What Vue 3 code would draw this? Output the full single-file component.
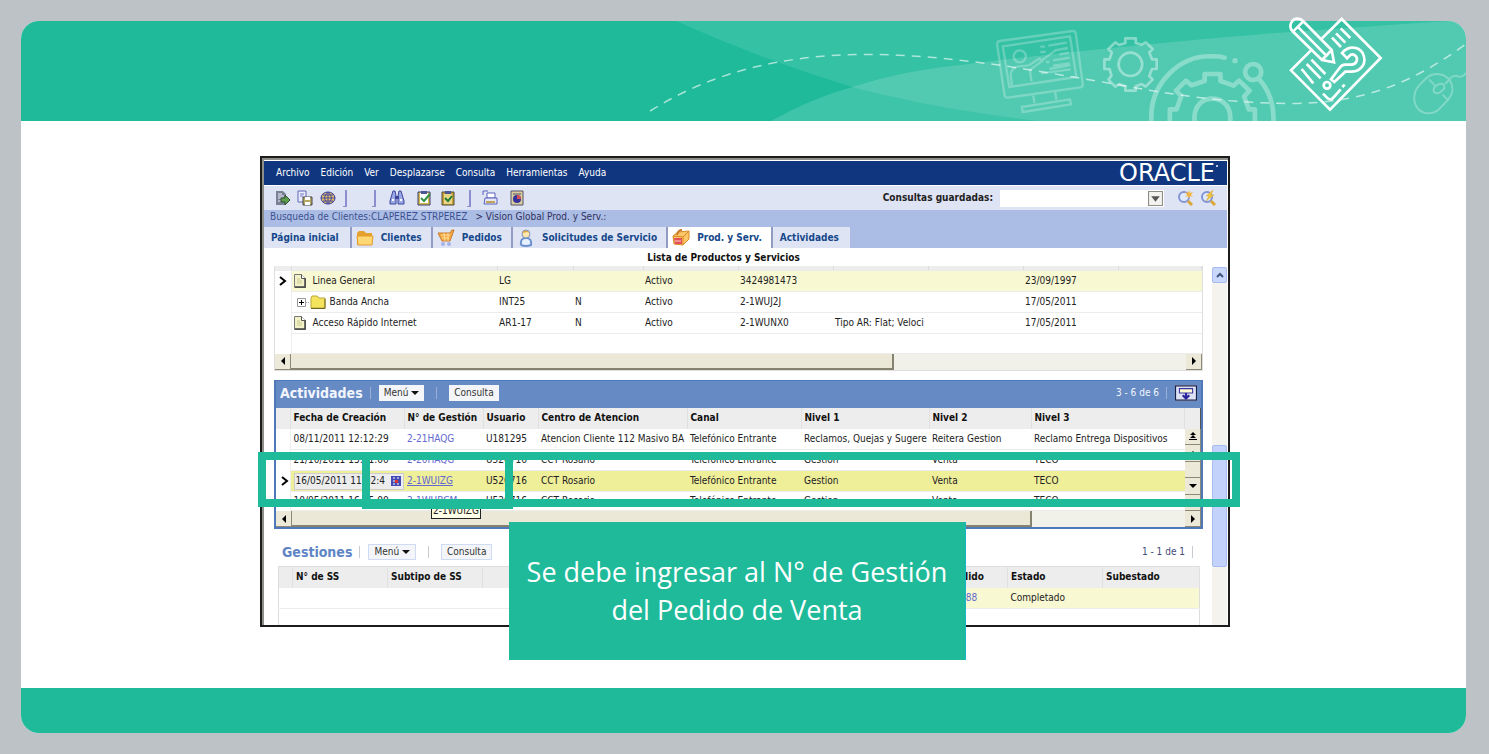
<script setup>
const menu = ['Archivo', 'Edición', 'Ver', 'Desplazarse', 'Consulta', 'Herramientas', 'Ayuda']
const tabs = [
  { label: 'Página inicial', icon: '' },
  { label: 'Clientes', icon: 'folder' },
  { label: 'Pedidos', icon: 'cart' },
  { label: 'Solicitudes de Servicio', icon: 'person' },
  { label: 'Prod. y Serv.', icon: 'box', active: true },
  { label: 'Actividades', icon: '' },
]
const products = [
  { icon: 'page', current: true, cells: ['Linea General', 'LG', '', 'Activo', '3424981473', '', '', '23/09/1997', ''] },
  { icon: 'folder', cells: ['Banda Ancha', 'INT25', 'N', 'Activo', '2-1WUJ2J', '', '', '17/05/2011', ''] },
  { icon: 'page', cells: ['Acceso Rápido Internet', 'AR1-17', 'N', 'Activo', '2-1WUNX0', 'Tipo AR: Flat; Veloci', '', '17/05/2011', ''] },
  { icon: '', cells: ['', '', '', '', '', '', '', '', ''] },
]
const activityHead = ['Fecha de Creación', 'N° de Gestión', 'Usuario', 'Centro de Atencion', 'Canal', 'Nivel 1', 'Nivel 2', 'Nivel 3']
const activities = [
  { id: '2-21HAQG', date: '08/11/2011 12:12:29', rest: ['U181295', 'Atencion Cliente 112 Masivo BA', 'Telefónico Entrante', 'Reclamos, Quejas y Sugere', 'Reitera Gestion', 'Reclamo Entrega Dispositivos'] },
  { id: '2-20HAQG', date: '21/10/2011 13:01:00', rest: ['U520716', 'CCT Rosario', 'Telefónico Entrante', 'Gestion', 'Venta', 'TECO'] },
  { id: '2-1WUIZG', date: '16/05/2011 11:02:4', current: true, rest: ['U520716', 'CCT Rosario', 'Telefónico Entrante', 'Gestion', 'Venta', 'TECO'] },
  { id: '2-1WUBCM', date: '10/05/2011 16:45:00', rest: ['U520716', 'CCT Rosario', 'Telefónico Entrante', 'Gestion', 'Venta', 'TECO'] },
]
const gestionHead = ['N° de SS', 'Subtipo de SS', '', '', '', '', 'Pedido', 'Estado', 'Subestado']
const gestionRow = ['', '', '', '', '', '', '21988', 'Completado', '']
</script>

<template>
  <div class="stage">
    <main class="slide">
      <header class="banner">
        <svg class="waves" viewBox="21 21 1445 100" preserveAspectRatio="xMaxYMid slice" aria-hidden="true">
          <path fill="#fff" fill-opacity=".1" d="M676 21Q760 59 852 87Q935 109 1038 121H1466V21Z" />
          <path fill="#fff" fill-opacity=".145" d="M771 121Q810 99 852 87Q905 70 960 65Q1115 46 1276 33L1432 22L1466 20V121Z" />
          <g transform="translate(960 0) scale(.3374 .3333)" fill="none" stroke="#fff" stroke-linejoin="round">
            <g stroke-width="7" opacity=".25">
              <path d="M117 123L333 93Q341 92 343 100L364 252Q365 260 357 262L142 293Q134 294 132 286L110 133Q110 124 117 123ZM127 139L326 109L345 231L146 261ZM217 287L221 309M282 277L286 299M183 321L326 298L329 313L186 336Z" />
              <circle cx="177" cy="169" r="18" />
              <path d="M154 258L150 222Q154 201 175 199L205 196L236 175L245 182L207 210L212 244M236 186L287 148" />
              <path d="M238 140H252M238 156H254M262 137L316 128M281 151L320 144M295 163L323 158M276 181L325 173M276 197L325 190M265 207L327 195M240 220L328 208M255 186H265" />
            </g>
            <g opacity=".4" stroke-width="8">
              <path d="M490 115H521V129L539 134L551 127L571 147L561 157L569 178H583V207H569L561 228L571 239L550 260L538 252L521 259V272H490V259L472 252L460 260L440 239L449 227L443 207H428V178H443L450 157L440 147L460 127L472 135L490 129Z" />
              <circle cx="505" cy="193" r="35" />
            </g>
            <g opacity=".32" stroke-width="14">
              <path stroke-linecap="round" d="M567 366V350C567 250 650 165 748 169Q767 168 784 173M888 239Q932 290 929 366" />
              <circle cx="869" cy="216" r="24" />
              <circle cx="815" cy="182" r="8" fill="#fff" stroke="none" />
              <path d="M622 366V328H642L656 288L640 272L670 242L686 256L725 243V222H772V243L811 257L827 242L858 272L842 290L856 328H874V366M695 366V350C697 278 799 278 801 350V366" />
            </g>
            <path opacity=".28" stroke-width="6" d="M1360 257L1382 235C1405 214 1438 221 1453 243C1464 264 1462 280 1446 300L1425 322C1407 343 1378 347 1358 327C1341 307 1343 278 1360 257ZM1390 238L1408 257M1430 284L1448 302M1408 260Q1420 248 1431 252Q1440 260 1432 269L1423 277Q1412 283 1405 276Q1401 268 1408 260M1438 252L1456 232Q1466 224 1478 230Q1490 232 1502 217" />
          </g>
          <path class="trail" d="M650 111C712 72 783 55 863 54.500C950 54 1042 72 1097 81C1159 92 1214 103 1291 103.500C1369 103 1416 80 1466 44" />
        </svg>
        <svg class="sketch" viewBox="970 44 290 294" aria-hidden="true">
          <g fill="none" stroke="#fff" stroke-width="8">
            <path d="M1069 118L1132 56L1249 173L1097 328L980 210L1040 150" />
            <path d="M984 92C971 77 982 55 1000 55Q1010 56 1016 62L1102 149L1109 186L1073 179ZM986 94L1017 63M1000 79L1089 169M1073 179L1102 149" />
            <path d="M1103 112L1130 140M1115 99L1143 127M1129 84L1158 113M1041 178L1083 221M1027 191L1069 234M1012 206L1047 249" />
            <path d="M1133 158C1151 136 1182 137 1195 158C1210 188 1190 214 1162 214H1143L1110 245L1100 237L1125 204Q1132 192 1145 193H1161C1178 192 1183 174 1172 165C1161 158 1156 165 1148 174Z" />
            <circle cx="1088" cy="255" r="10" />
            <path d="M1076 280L1090 294Q1098 301 1106 293L1129 267M1134 260L1141 253" />
          </g>
        </svg>
      </header>

      <section class="body">
        <div class="window">
          <div class="menubar">
            <button v-for="m in menu" :key="m" type="button">{{ m }}</button>
            <span class="oracle">ORACLE<i></i></span>
          </div>

          <div class="toolbar">
            <button type="button" aria-label="Salir"><svg viewBox="0 0 16 16"><path d="M2 1h7l3 3v11H2z" fill="#7a8296" /><path d="M4 4h4M4 6h6M4 8h5M4 11h4" stroke="#eef0f8" /><path d="M7 8h4V5l5 5-5 5v-3H7z" fill="#5da04c" stroke="#354c35" /></svg></button>
            <button type="button" aria-label="Guardar"><svg viewBox="0 0 16 16"><path d="M1 1h8v11H1z" fill="#e9edff" stroke="#6065b4" /><path d="M3 4h4M3 6h3" stroke="#777bc6" /><path d="M6 7h9v8H6z" fill="#b6a965" stroke="#444" /><path d="M8 7h5v3H8zM8 12h5v3H8z" fill="#fff" /></svg></button>
            <button type="button" aria-label="Mapa"><svg viewBox="0 0 16 16"><ellipse cx="8" cy="8" rx="7" ry="6" fill="#e1c15b" stroke="#31339a" /><path d="M8 2v12M1 8h14M3 5h10M3 11h10M8 2Q1 8 8 14M8 2Q15 8 8 14" fill="none" stroke="#4a4ba6" /></svg></button>
            <span class="bracket"></span><span class="bracket far"></span>
            <button class="second" type="button" aria-label="Buscar"><svg viewBox="0 0 16 16"><path d="M4 1h2l1 5v8H1v-3zM10 1h2l3 10v3H9V6z" fill="#9aa9e6" stroke="#3c4599" /><path d="M6 6h4v3H6z" fill="#3c4599" /><path d="M3 10h2M11 10h2" stroke="#fff" stroke-width="2" /></svg></button>
            <button class="second" type="button" aria-label="Nueva consulta"><svg viewBox="0 0 16 16"><path d="M2 2h12v13H2z" fill="#d8b84e" stroke="#39406e" /><path d="M4 3h8v10H4z" fill="#fff" /><path d="M5 1h6v3H5z" fill="#4b5795" /><path d="M5 8l3 3 6-7" fill="none" stroke="#319244" stroke-width="2" /></svg></button>
            <button class="near" type="button" aria-label="Ejecutar consulta"><svg viewBox="0 0 16 16"><path d="M2 2h12v13H2z" fill="#c4a336" stroke="#554a38" /><path d="M4 4h8v10H4z" fill="#e8d686" /><path d="M5 1h6v3H5z" fill="#4b5795" /><path d="M5 8l3 3 4-5" fill="none" stroke="#207d35" stroke-width="2" /></svg></button>
            <span class="bracket second"></span>
            <button class="second" type="button" aria-label="Imprimir"><svg viewBox="0 0 16 16"><path d="M1 5V1h5" fill="none" stroke="#5961bd" /><path d="M5 3h8v5H5z" fill="#fff" stroke="#5961bd" /><path d="M3 8h12v6H2z" fill="#e4e5f8" stroke="#5961bd" /><path d="M4 12h9" stroke="#c3a450" stroke-width="2" /></svg></button>
            <button class="second" type="button" aria-label="Informe"><svg viewBox="0 0 16 16"><path d="M2 1h12v14H2z" fill="#d9cd9c" stroke="#56536e" /><path d="M4 4h8" stroke="#56536e" /><circle cx="8" cy="9" r="4" fill="#35329c" /><path d="M8 9V5a4 4 0 0 1 4 4z" fill="#d84f55" /></svg></button>
            <label for="saved">Consultas guardadas:</label>
            <div class="pick"><select id="saved"><option></option></select><svg viewBox="0 0 14 14"><path d="M.5.5h13v13H.5z" fill="#f3f2ef" stroke="#8d8d88" /><path d="M3 5h8l-4 5z" fill="#555" /></svg></div>
            <button type="button" aria-label="Crear búsqueda"><svg viewBox="0 0 16 16"><circle cx="6" cy="7" r="5" fill="#dfeaff" stroke="#8393d3" stroke-width="2" /><path d="M10 11l4 4" stroke="#daa638" stroke-width="3" /><path d="M11 0l1 3 3-1-2 3 2 2-3-1-1 3-1-3-3 1 2-2-2-3 3 1z" fill="#f3b740" /></svg></button>
            <button type="button" aria-label="Búsqueda rápida"><svg viewBox="0 0 16 16"><circle cx="6" cy="7" r="5" fill="#dfeaff" stroke="#8393d3" stroke-width="2" /><path d="M10 11l4 4" stroke="#daa638" stroke-width="3" /><path d="M12 0L5 6h3l-3 5 8-6h-3z" fill="#f3c83f" stroke="#d9a63a" stroke-width=".5" /></svg></button>
          </div>

          <nav class="crumbs"><a href="#">Busqueda de Clientes:CLAPEREZ STRPEREZ</a><span>&gt; Vision Global Prod. y Serv.:</span></nav>

          <nav class="tabs">
            <a v-for="t in tabs" :key="t.label" href="#" :class="{ active: t.active, plain: !t.icon }">
              <svg v-if="t.icon === 'folder'" viewBox="0 0 18 18"><path d="M1 4l2-2h5l2 2h6v12H1z" fill="#e5a12d" /><path d="M1 7h16l-1 9H2z" fill="#ffd875" stroke="#e09a2a" /></svg>
              <svg v-else-if="t.icon === 'cart'" viewBox="0 0 18 18"><path d="M1 4h12l2-3h2l-4 11H5z" fill="#f7a941" stroke="#c6792a" /><path d="M4 6h9M5 9h7M7 4l1 8M11 4v8" stroke="#fbdc9b" /><circle cx="6" cy="15" r="2" fill="#a5b2e6" /><circle cx="12" cy="15" r="2" fill="#a5b2e6" /></svg>
              <svg v-else-if="t.icon === 'person'" viewBox="0 0 18 18"><path d="M4 16q-1-7 5-7t5 7q-5 2-10 0" fill="#e6f0ff" stroke="#6d91cf" stroke-width="2" /><circle cx="9" cy="5" r="4" fill="#ffe6ac" stroke="#7b92bd" /><path d="M5 4q3-5 8 0l-3-1z" fill="#d9a236" /></svg>
              <svg v-else-if="t.icon === 'box'" viewBox="0 0 18 18"><path d="M1 7l5-4 11-1v8l-6 6-9-1z" fill="#fbc667" stroke="#d88a26" /><path d="M1 7l10 1 6-6M11 8v8" fill="none" stroke="#d88a26" /><path d="M2 9h8v6H3z" fill="#e4515b" /><path d="M3 12h6" stroke="#ffd2c2" /><path d="M5 6Q6 1 10 1" fill="none" stroke="#c97a2a" stroke-width="2" /></svg>
              {{ t.label }}
            </a>
          </nav>

          <div class="workspace">
            <div class="panels">
              <h2 class="listing">Lista de Productos y Servicios</h2>
              <section class="panel products">
                <table>
                  <colgroup><col class="w16" /><col class="w206" /><col class="w76" /><col class="w70" /><col class="w95" /><col class="w95" /><col class="w95" /><col class="w95" /><col class="w95" /><col /></colgroup>
                  <tbody>
                    <tr class="sliver"><td v-for="n in 10" :key="n"></td></tr>
                    <tr v-for="(p, r) in products" :key="r" :class="{ pale: p.current, blank: !p.icon }">
                      <td class="mark"><svg v-if="p.current" viewBox="0 0 8 10"><path d="M1 1l5 4-5 4" fill="none" stroke="#000" stroke-width="2" /></svg></td>
                      <td v-for="(c, i) in p.cells" :key="i">
                        <span v-if="i === 0" class="node">
                          <svg v-if="p.icon === 'page'" class="page" viewBox="0 0 12 14"><path d="M.5.5h7l4 4v9H.5z" fill="#f2f2c8" stroke="#777" /><path d="M11 4v9H1" fill="none" stroke="#444" stroke-width="1.500" /><path d="M7.500.5v4h4" fill="#fff" stroke="#555" /><path d="M3 5h3M3 7h5M3 9h5" stroke="#ccc891" /></svg>
                          <svg v-if="p.icon === 'folder'" class="tree" viewBox="0 0 30 14"><path d="M1.500 3.500h8v8h-8z" fill="#fff" stroke="#999" /><path d="M3 7.500h5M5.500 5v5" stroke="#000" /><path d="M10 7.500h4" stroke="#aaa" stroke-dasharray="1 1" /><path d="M15 3l1-2h5l2 2h6v10H15z" fill="#f3e35d" stroke="#b9a73a" /><path d="M29 4v9.500H15" fill="none" stroke="#6e6423" /></svg>
                          {{ c }}
                        </span>
                        <template v-else>{{ c }}</template>
                      </td>
                    </tr>
                  </tbody>
                </table>
                <div class="hbar"><button type="button" aria-label="Izquierda" class="end"><svg viewBox="0 0 8 8"><path d="M6 0v8L2 4z" /></svg></button><span class="thumb long"></span><button type="button" aria-label="Derecha" class="end right"><svg viewBox="0 0 8 8"><path d="M2 0v8l4-4z" /></svg></button></div>
              </section>

              <section class="panel activities">
                <div class="bar">
                  <h3>Actividades</h3><i></i><button type="button">Menú <b></b></button><i class="mid"></i><button type="button">Consulta</button>
                  <span class="count">3 - 6 de 6</span><i></i>
                  <button class="expand" type="button" aria-label="Expandir"><svg viewBox="0 0 20 14"><path d="M.5.5h19v13H.5z" fill="#dde3f5" stroke="#181d44" /><path d="M4 3h12v4H4z" fill="#fffbd0" stroke="#3d36a0" /><path d="M10 7v5M7 9l3 3 3-3" fill="none" stroke="#29249a" stroke-width="2" /></svg></button>
                </div>
                <div class="grid">
                  <table>
                    <colgroup><col class="w14" /><col class="w114" /><col class="w79" /><col class="w55" /><col class="w149" /><col class="w114" /><col class="w128" /><col class="w102" /><col /></colgroup>
                    <thead><tr><th></th><th v-for="h in activityHead" :key="h">{{ h }}</th></tr></thead>
                    <tbody>
                      <tr v-for="a in activities" :key="a.id" :class="{ current: a.current }">
                        <td class="mark"><svg v-if="a.current" viewBox="0 0 8 10"><path d="M1 1l5 4-5 4" fill="none" stroke="#000" stroke-width="2" /></svg></td>
                        <td><span v-if="a.current" class="field">{{ a.date }}<svg viewBox="0 0 10 10"><path d="M0 0h10v10H0z" fill="#434bb4" /><path d="M2 2h2M6 2h2M2 5h2M2 8h2M6 8h2" stroke="#fff" /><path d="M4 4h3v3H4z" fill="#d33" /></svg></span><template v-else>{{ a.date }}</template></td>
                        <td><a href="#">{{ a.id }}</a></td>
                        <td v-for="(c, i) in a.rest" :key="i">{{ c }}</td>
                      </tr>
                    </tbody>
                  </table>
                  <div class="side">
                    <div class="cap"></div>
                    <button type="button" aria-label="Inicio"><svg viewBox="0 0 8 8"><path d="M4 0l3 3H1zM4 3l3 3H1zM0 7h8v1H0z" /></svg></button>
                    <button type="button" aria-label="Arriba"><svg viewBox="0 0 8 8"><path d="M4 2l4 4H0z" /></svg></button>
                    <span class="knob"></span>
                    <button type="button" aria-label="Abajo"><svg viewBox="0 0 8 8"><path d="M4 6l4-4H0z" /></svg></button>
                    <button type="button" aria-label="Fin"><svg viewBox="0 0 8 8"><path d="M4 4L1 1h6zM4 7L1 4h6z" /></svg></button>
                  </div>
                </div>
                <div class="hbar"><button type="button" aria-label="Izquierda" class="end"><svg viewBox="0 0 8 8"><path d="M6 0v8L2 4z" /></svg></button><span class="thumb longer"></span><button type="button" aria-label="Derecha" class="end right"><svg viewBox="0 0 8 8"><path d="M2 0v8l4-4z" /></svg></button></div>
                <div class="tip">2-1WUIZG</div>
              </section>

              <section class="panel gestiones">
                <div class="bar">
                  <h3>Gestiones</h3><i></i><button type="button">Menú <b></b></button><i class="mid"></i><button type="button">Consulta</button>
                  <span class="count">1 - 1 de 1</span><i class="last"></i>
                </div>
                <table>
                  <colgroup><col class="w14" /><col class="w95" /><col class="w95" /><col class="w95" /><col class="w95" /><col class="w95" /><col class="w178" /><col class="w62" /><col class="w95" /><col /></colgroup>
                  <thead><tr><th></th><th v-for="(h, i) in gestionHead" :key="i">{{ h }}</th></tr></thead>
                  <tbody>
                    <tr><td></td><td v-for="(c, i) in gestionRow" :key="i" :class="{ lit: i > 3 }"><a v-if="i === 6" href="#">{{ c }}</a><template v-else>{{ c }}</template></td></tr>
                    <tr class="partial"><td v-for="n in 10" :key="n"></td></tr>
                  </tbody>
                </table>
              </section>
            </div>
            <div class="vbar">
              <button type="button" aria-label="Subir"><svg viewBox="0 0 8 8"><path d="M1 6l3-3 3 3" fill="none" stroke="#40557f" stroke-width="2" /></svg></button>
              <span></span>
            </div>
          </div>

          <div class="frame row-frame"></div>
          <div class="frame cell-frame"></div>
          <p class="callout">Se debe ingresar al N° de Gestión<br />del Pedido de Venta</p>
        </div>
      </section>
      <footer class="base"></footer>
    </main>
  </div>
</template>

<style>
body { margin: 0; background: #bcc2c6; }
</style>

<style scoped>
* { box-sizing: border-box; }
.stage { padding: 21px 23px 21px 21px; background: #bcc2c6; }
.slide { border-radius: 18px; background: #fff; font: 10px/14px "DejaVu Sans Condensed", "Open Sans", sans-serif; color: #222; }
.banner { position: relative; height: 100px; border-radius: 18px 18px 0 0; background: #1eba9a; }
.waves { display: block; width: 100%; height: 100%; border-radius: 0 18px 0 0; }
.trail { fill: none; stroke: #fff; stroke-width: 1.500; stroke-opacity: .6; stroke-dasharray: 9 7; }
.sketch { position: absolute; right: 81px; top: -6px; width: 98px; height: 98px; }
.body { padding: 35px 236px 61px 239px; }
.base { height: 45px; border-radius: 0 0 18px 18px; background: #1eba9a; }
button { font: inherit; color: inherit; border: 0; background: none; padding: 0; margin: 0; }
a { color: inherit; text-decoration: none; }
svg { display: block; flex: none; }
i { font-style: normal; }

.window { position: relative; border: 2px solid #1c1c1c; padding: 3px 1px 0 2px; background: #fff; box-shadow: inset 1px 1px 0 1px #8d8f8b; }
.menubar { display: flex; align-items: center; height: 24px; padding: 0 12px; gap: 11px; background: #103680; color: #fff; }
.oracle { position: relative; margin-left: auto; font: 24px/24px "DejaVu Sans", sans-serif; }
.oracle i { position: absolute; right: -3px; top: 4px; width: 2px; height: 2px; background: #b8c4e0; }
.toolbar { display: flex; align-items: center; height: 25px; padding: 0 10px; gap: 7px; background: #dfe4f5; border-top: 1px solid #fff; }
.toolbar svg { width: 16px; height: 16px; }
.bracket { width: 4px; height: 17px; border: solid #8b8fd2; border-width: 0 2px 1px 0; }
.far { margin: 0 2px 0 18px; }
.second { margin-left: 4px; }
.near { margin-left: 1px; }
.toolbar label { margin-left: auto; font-weight: bold; color: #222; }
.pick { position: relative; width: 164px; height: 17px; margin-right: 7px; }
.pick select { width: 100%; height: 100%; border: 0; background: #fff; appearance: none; }
.pick svg { position: absolute; right: 1px; top: 1px; width: 15px; height: 15px; pointer-events: none; }
.crumbs { display: flex; gap: 8px; height: 17px; padding: 0 6px; background: #abbde4; color: #3d5192; }
.crumbs span { color: #32315f; }
.tabs { display: flex; height: 21px; background: #abbde4; font-weight: bold; color: #15488a; }
.tabs a { display: flex; align-items: center; gap: 7px; padding: 0 9px 0 4px; background: #dfe4f5; border-right: 2px solid #929bc2; white-space: nowrap; }
.tabs a.plain { padding: 0 11px 0 7px; }
.tabs a.active { background: #fff; }
.tabs a:last-child { border: 0; }
.tabs svg { width: 18px; height: 18px; }

.workspace { display: flex; gap: 9px; }
.panels { flex: 1; min-width: 0; padding-left: 10px; }
.listing { margin: 0; padding: 3px 30px 0 0; height: 18px; text-align: center; font-size: 10px; line-height: 14px; color: #111; }
.panel { position: relative; }
table { width: 100%; table-layout: fixed; border-collapse: collapse; }
td, th { height: 21px; padding: 0 0 0 3px; text-align: left; white-space: nowrap; overflow: hidden; border-bottom: 1px solid #ececec; }
th { background: #ededed; border: 0; border-right: 1px solid #e0e0e0; color: #111; }
.mark, tr .mark { background: #fff; border-bottom: 0; border-right: 1px solid #eee; }
.mark svg { width: 8px; height: 10px; margin-left: 2px; }
.w14 { width: 14px; } .w16 { width: 16px; } .w55 { width: 55px; } .w62 { width: 62px; } .w70 { width: 70px; } .w76 { width: 76px; }
.w79 { width: 79px; } .w95 { width: 95px; } .w102 { width: 102px; } .w114 { width: 114px; } .w128 { width: 128px; }
.w149 { width: 149px; } .w178 { width: 178px; } .w206 { width: 206px; }
.products { border: solid #dedede; border-width: 0 1px 1px; }
.products td { padding-left: 2px; }
.sliver td { height: 4px; background: #ededed; border-right: 1px solid #ddd; }
.blank td { height: 20px; }
.pale { background: #f8f8d2; }
.node { display: flex; align-items: center; gap: 7px; }
.page { width: 12px; height: 14px; }
.tree { width: 30px; height: 14px; margin-left: 2px; margin-right: -3px; }
.hbar { display: flex; height: 16px; background: #f2f1e9; }
.end { display: grid; place-items: center; width: 16px; background: #ece9d8; border: solid #8c8976; border-width: 0 1px 1px 0; }
.end svg, .side svg, .vbar svg { width: 8px; height: 8px; }
.end.right { margin-left: auto; }
.thumb { background: #ebe8d7; border: solid #858270; border-width: 0 2px 2px 0; }
.long { width: 65%; }
.longer { width: 80%; }

.bar { display: flex; align-items: center; height: 27px; }
.bar h3 { margin: 0; font-size: 14px; line-height: 16px; }
.bar > i { width: 1px; height: 12px; margin: 0 8px 0 7px; background: #9aaed6; }
.bar > i.mid { margin: 0 12px; }
.bar button { height: 16px; padding: 0 5px; background: #f4f5f8; color: #333; white-space: nowrap; }
.bar b { display: inline-block; border: solid transparent; border-width: 4px 4px 0; border-top-color: #111; margin-bottom: 1px; }
.count { margin-left: auto; }
.activities { margin-top: 9px; border: solid #4f78bb; border-width: 1px 2px 2px; background: #fff; }
.activities .bar { padding: 0 4px 2px; background: #668ac4; color: #f2f5fc; }
.bar .expand { padding: 0; width: 22px; height: 16px; }
.expand svg { width: 22px; height: 16px; }
.grid { display: flex; }
.grid table { flex: 1; width: 0; }
.grid tr:last-child td { height: 19px; }
.side { width: 16px; display: flex; flex-direction: column; }
.cap { height: 21px; background: #ededed; border-right: 1px solid #555; }
.side button, .knob { display: grid; flex: 1; place-items: center; background: #ece9d8; border: solid #8c8976; border-width: 0 1px 1px 0; }
.current { background: #efee99; }
.field { display: flex; align-items: center; justify-content: space-between; height: 17px; padding: 0 2px 0 1px; background: #ededed; border: 1px solid #ccc; }
.field svg { width: 10px; height: 10px; }
td a { color: #6468cf; }
.current a { text-decoration: underline; }
.tip { position: absolute; left: 155px; bottom: 8px; padding: 0 1px; border: 1px solid #222; background: #ffffe8; line-height: 14px; }

.gestiones { padding: 0 3px 0 4px; margin-top: 10px; }
.gestiones .bar { padding: 0 0 2px 4px; color: #444a77; }
.gestiones h3 { color: #5f85c5; }
.gestiones .bar > i { background: #c9cbd2; }
.gestiones .bar > i.last { margin-right: 7px; }
.gestiones .bar button { border: 1px solid #cfdbf3; }
.gestiones table { border: 1px solid #ddd; border-bottom: 0; }
.lit { background: #f8f8d2; }
.partial td { height: 16px; border-bottom: 0; }
.vbar { width: 15px; margin-top: 19px; background: #f4f3ee; }
.vbar button { display: grid; place-items: center; width: 15px; height: 16px; background: #c9d7fb; border: 1px solid #a9bcf0; border-radius: 2px; }
.vbar span { display: block; height: 122px; margin-top: 162px; background: #c3d2fa; border: 1px solid #a8bdf2; border-radius: 2px; }

.frame { position: absolute; border: 8px solid #1eba9a; pointer-events: none; }
.row-frame { left: -4px; right: -12px; top: 294px; height: 55px; }
.cell-frame { left: 100px; width: 151px; top: 294px; height: 57px; }
.callout { position: absolute; left: 247px; width: 457px; top: 364px; height: 138px; margin: 0; padding-top: 31px; background: #1eba9a; border-right: 1px solid #18b4c8; color: #fff; text-align: center; font: 500 27px/38px "Open Sans", sans-serif; white-space: nowrap; }
</style>
